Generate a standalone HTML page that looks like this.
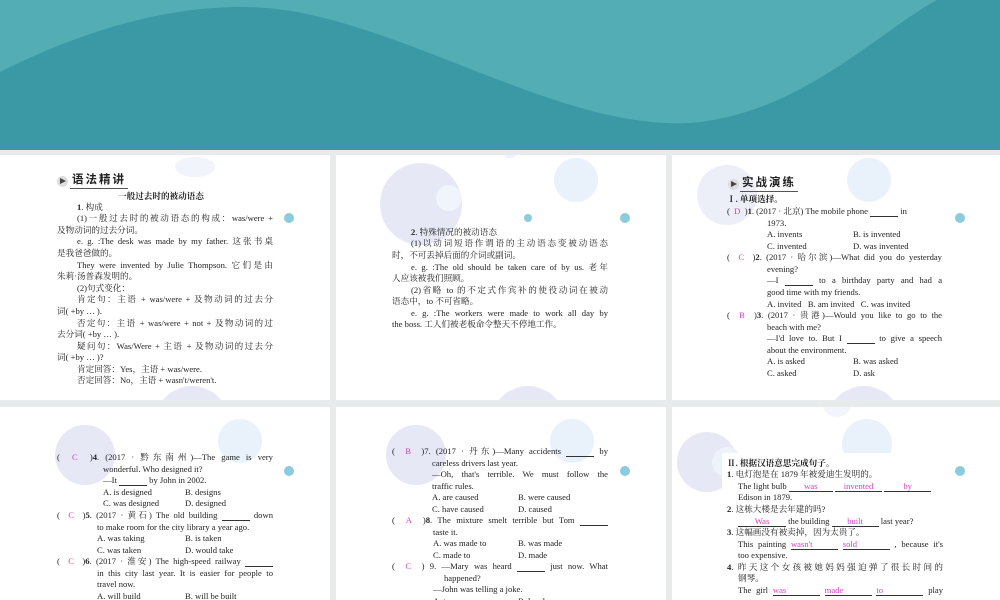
<!DOCTYPE html>
<html><head><meta charset="utf-8"><style>
*{margin:0;padding:0;box-sizing:border-box}
body{width:1000px;height:600px;overflow:hidden;background:#e7ebec;position:relative;font-family:"Liberation Serif","Noto Serif CJK SC",serif;color:#222}
.p{position:absolute;background:#fff;overflow:hidden}
.c{position:absolute;border-radius:50%}
.l{position:absolute;font-size:8.6px;line-height:11px;white-space:nowrap}
.j{text-align:justify;text-align-last:justify;white-space:normal;height:11px}
.m{color:#d23fc4}
.u{display:inline-block;border-bottom:0.8px solid #333;text-align:center;line-height:9px;vertical-align:baseline}
.b{font-weight:bold}
.h{position:absolute;font-family:"Liberation Sans","Noto Sans CJK SC",sans-serif;font-weight:bold;font-size:11.5px;line-height:13px;letter-spacing:2px;border-bottom:1px solid #555;padding:0 2px 1px}
.ic{position:absolute;width:11px;height:11px;border-radius:50%;background:#ddd}
.ic:after{content:"";position:absolute;left:3px;top:2px;border-left:6px solid #444;border-top:3.5px solid transparent;border-bottom:3.5px solid transparent}
.dot{position:absolute;width:10px;height:10px;border-radius:50%;background:#8ccbdb}
</style></head><body>
<svg style="position:absolute;left:0;top:0" width="1000" height="150"><rect width="1000" height="150" fill="#3b99a5"/><path d="M0 72 C100 22 190 2 268 8 C400 20 560 130 689 123 C800 115 880 30 937 0 L0 0 Z" fill="#53adb5"/></svg>

<!-- panel 1 -->
<div class="p" style="left:0;top:155px;width:330px;height:245px">
<div class="c" style="left:175px;top:2px;width:40px;height:20px;background:#f1f4fb"></div>
<div class="c" style="left:155px;top:231px;width:74px;height:74px;background:#e6e8f6"></div>
<div class="dot" style="left:284px;top:58px"></div>
<div class="ic" style="left:57px;top:21px"></div>
<div class="h" style="left:70px;top:19px">语法精讲</div>
<div class="l b" style="left:118px;top:36px">一般过去时的被动语态</div>
<div class="l" style="left:77px;top:47px"><b>1</b>. 构成</div>
<div class="l j" style="left:77px;top:58px;width:196px">(1)一般过去时的被动语态的构成：was/were +</div>
<div class="l" style="left:57px;top:70px">及物动词的过去分词。</div>
<div class="l j" style="left:77px;top:81px;width:196px">e. g. :The desk was made by my father. 这张书桌</div>
<div class="l" style="left:57px;top:93px">是我爸爸做的。</div>
<div class="l j" style="left:77px;top:105px;width:196px">They were invented by Julie Thompson. 它们是由</div>
<div class="l" style="left:57px;top:116px">朱莉·汤普森发明的。</div>
<div class="l" style="left:77px;top:128px">(2)句式变化：</div>
<div class="l j" style="left:77px;top:139px;width:196px">肯定句：主语 + was/were + 及物动词的过去分</div>
<div class="l" style="left:57px;top:151px">词( +by … ).</div>
<div class="l j" style="left:77px;top:163px;width:196px">否定句：主语 + was/were + not + 及物动词的过</div>
<div class="l" style="left:57px;top:174px">去分词( +by … ).</div>
<div class="l j" style="left:77px;top:186px;width:196px">疑问句：Was/Were + 主语 + 及物动词的过去分</div>
<div class="l" style="left:57px;top:197px">词( +by … )?</div>
<div class="l" style="left:77px;top:209px">肯定回答：Yes，主语 + was/were.</div>
<div class="l" style="left:77px;top:220px">否定回答：No，主语 + wasn't/weren't.</div>
</div>

<!-- panel 2 -->
<div class="p" style="left:336px;top:155px;width:330px;height:245px">
<div class="c" style="left:44px;top:8px;width:82px;height:82px;background:#e6e8f6"></div>
<div class="c" style="left:100px;top:30px;width:26px;height:26px;background:#f0f4fb"></div>
<div class="c" style="left:218px;top:3px;width:44px;height:44px;background:#e9f1fb"></div>
<div class="dot" style="left:188px;top:59px;width:8px;height:8px"></div>
<div class="dot" style="left:284px;top:58px"></div>
<div class="c" style="left:165px;top:-15px;width:18px;height:18px;background:#eef2fa"></div>
<div class="c" style="left:155px;top:231px;width:74px;height:74px;background:#e6e8f6"></div>
<div class="l" style="left:75px;top:72px"><b>2</b>. 特殊情况的被动语态</div>
<div class="l j" style="left:75px;top:83px;width:197px">(1)以动词短语作谓语的主动语态变被动语态</div>
<div class="l" style="left:56px;top:95px">时，不可丢掉后面的介词或副词。</div>
<div class="l j" style="left:75px;top:107px;width:197px">e. g. :The old should be taken care of by us. 老年</div>
<div class="l" style="left:56px;top:118px">人应该被我们照顾。</div>
<div class="l j" style="left:75px;top:130px;width:197px">(2)省略 to 的不定式作宾补的使役动词在被动</div>
<div class="l" style="left:56px;top:141px">语态中，to 不可省略。</div>
<div class="l j" style="left:75px;top:153px;width:197px">e. g. :The workers were made to work all day by</div>
<div class="l" style="left:56px;top:164px">the boss. 工人们被老板命令整天不停地工作。</div>
</div>

<!-- panel 3 -->
<div class="p" style="left:672px;top:155px;width:328px;height:245px">
<div class="c" style="left:25px;top:10px;width:60px;height:60px;background:#eceef8"></div>
<div class="c" style="left:175px;top:3px;width:44px;height:44px;background:#e9f1fb"></div>
<div class="dot" style="left:283px;top:58px"></div>
<div class="c" style="left:155px;top:231px;width:74px;height:74px;background:#e6e8f6"></div>
<div class="ic" style="left:56px;top:24px"></div>
<div class="h" style="left:68px;top:22px">实战演练</div>
<div class="l b" style="left:55px;top:39px">Ⅰ. 单项选择。</div>
<div class="l" style="left:55px;top:51px">( &nbsp;<span class="m">D</span>&nbsp; )<b>1</b>. (2017 · 北京) The mobile phone <span class="u" style="width:28px">&nbsp;</span> in</div>
<div class="l" style="left:95px;top:63px">1973.</div>
<div class="l" style="left:95px;top:74px">A. invents</div><div class="l" style="left:181px;top:74px">B. is invented</div>
<div class="l" style="left:95px;top:86px">C. invented</div><div class="l" style="left:181px;top:86px">D. was invented</div>
<div class="l j" style="left:55px;top:97px;width:215px">( &nbsp;<span class="m">C</span>&nbsp; )<b>2</b>. (2017 · 哈尔滨)—What did you do yesterday</div>
<div class="l" style="left:95px;top:109px">evening?</div>
<div class="l j" style="left:95px;top:120px;width:175px">—I <span class="u" style="width:28px">&nbsp;</span> to a birthday party and had a</div>
<div class="l" style="left:95px;top:132px">good time with my friends.</div>
<div class="l" style="left:95px;top:144px">A. invited &nbsp;&nbsp;B. am invited &nbsp;&nbsp;C. was invited</div>
<div class="l j" style="left:55px;top:155px;width:215px">( &nbsp;<span class="m">B</span>&nbsp; )<b>3</b>. (2017 · 贵港)—Would you like to go to the</div>
<div class="l" style="left:95px;top:167px">beach with me?</div>
<div class="l j" style="left:95px;top:178px;width:175px">—I'd love to. But I <span class="u" style="width:28px">&nbsp;</span> to give a speech</div>
<div class="l" style="left:95px;top:190px">about the environment.</div>
<div class="l" style="left:95px;top:201px">A. is asked</div><div class="l" style="left:181px;top:201px">B. was asked</div>
<div class="l" style="left:95px;top:213px">C. asked</div><div class="l" style="left:181px;top:213px">D. ask</div>
</div>

<!-- row 2 panel 1 -->
<div class="p" style="left:0;top:407px;width:330px;height:193px">
<div class="c" style="left:55px;top:18px;width:60px;height:60px;background:#e6e8f6"></div>
<div class="c" style="left:218px;top:12px;width:44px;height:44px;background:#e9f1fb"></div>
<div class="dot" style="left:284px;top:59px"></div>
<div class="l j" style="left:57px;top:45px;width:216px">( &nbsp;<span class="m">C</span>&nbsp; )<b>4</b>. (2017 · 黔东南州)—The game is very</div>
<div class="l" style="left:103px;top:57px">wonderful. Who designed it?</div>
<div class="l" style="left:103px;top:68px">—It <span class="u" style="width:28px">&nbsp;</span> by John in 2002.</div>
<div class="l" style="left:103px;top:80px">A. is designed</div><div class="l" style="left:185px;top:80px">B. designs</div>
<div class="l" style="left:103px;top:91px">C. was designed</div><div class="l" style="left:185px;top:91px">D. designed</div>
<div class="l j" style="left:57px;top:103px;width:216px">( &nbsp;<span class="m">C</span>&nbsp; )<b>5</b>. (2017 · 黄石) The old building <span class="u" style="width:28px">&nbsp;</span> down</div>
<div class="l" style="left:97px;top:115px">to make room for the city library a year ago.</div>
<div class="l" style="left:97px;top:126px">A. was taking</div><div class="l" style="left:185px;top:126px">B. is taken</div>
<div class="l" style="left:97px;top:138px">C. was taken</div><div class="l" style="left:185px;top:138px">D. would take</div>
<div class="l j" style="left:57px;top:149px;width:216px">( &nbsp;<span class="m">C</span>&nbsp; )<b>6</b>. (2017 · 淮安) The high-speed railway <span class="u" style="width:28px">&nbsp;</span></div>
<div class="l j" style="left:97px;top:161px;width:176px">in this city last year. It is easier for people to</div>
<div class="l" style="left:97px;top:172px">travel now.</div>
<div class="l" style="left:97px;top:184px">A. will build</div><div class="l" style="left:185px;top:184px">B. will be built</div>
</div>

<!-- row 2 panel 2 -->
<div class="p" style="left:336px;top:407px;width:330px;height:193px">
<div class="c" style="left:50px;top:18px;width:60px;height:60px;background:#e6e8f6"></div>
<div class="c" style="left:214px;top:12px;width:44px;height:44px;background:#e9f1fb"></div>
<div class="dot" style="left:284px;top:59px"></div>
<div class="l j" style="left:56px;top:39px;width:216px">( &nbsp;<span class="m">B</span>&nbsp; )7. (2017 · 丹东)—Many accidents <span class="u" style="width:28px">&nbsp;</span> by</div>
<div class="l" style="left:96px;top:51px">careless drivers last year.</div>
<div class="l j" style="left:96px;top:62px;width:176px">—Oh, that's terrible. We must follow the</div>
<div class="l" style="left:96px;top:74px">traffic rules.</div>
<div class="l" style="left:96px;top:85px">A. are caused</div><div class="l" style="left:182px;top:85px">B. were caused</div>
<div class="l" style="left:96px;top:97px">C. have caused</div><div class="l" style="left:182px;top:97px">D. caused</div>
<div class="l j" style="left:56px;top:108px;width:216px">( &nbsp;<span class="m">A</span>&nbsp; )<b>8</b>. The mixture smelt terrible but Tom <span class="u" style="width:28px">&nbsp;</span></div>
<div class="l" style="left:97px;top:120px">taste it.</div>
<div class="l" style="left:97px;top:131px">A. was made to</div><div class="l" style="left:182px;top:131px">B. was made</div>
<div class="l" style="left:97px;top:143px">C. made to</div><div class="l" style="left:182px;top:143px">D. made</div>
<div class="l j" style="left:56px;top:154px;width:216px">( &nbsp;<span class="m">C</span>&nbsp; ) 9. —Mary was heard <span class="u" style="width:28px">&nbsp;</span> just now. What</div>
<div class="l" style="left:108px;top:166px">happened?</div>
<div class="l" style="left:97px;top:177px">—John was telling a joke.</div>
<div class="l" style="left:97px;top:189px">A. to cry</div><div class="l" style="left:182px;top:189px">B. laugh</div>
</div>

<!-- row 2 panel 3 -->
<div class="p" style="left:672px;top:407px;width:328px;height:193px">
<div class="c" style="left:5px;top:25px;width:60px;height:60px;background:#e6e8f6"></div>
<div class="c" style="left:40px;top:40px;width:30px;height:30px;background:#eef2fa"></div>
<div class="c" style="left:170px;top:12px;width:50px;height:50px;background:#e9f1fb"></div>
<div class="c" style="left:150px;top:-20px;width:30px;height:30px;background:#f2f5fb"></div>
<div class="dot" style="left:283px;top:59px"></div>
<div style="position:absolute;left:50px;top:46px;width:200px;height:150px;background:#fff"></div>
<div class="l b" style="left:55px;top:51px">Ⅱ. 根据汉语意思完成句子。</div>
<div class="l" style="left:55px;top:62px"><b>1</b>. 电灯泡是在 1879 年被爱迪生发明的。</div>
<div class="l" style="left:66px;top:74px">The light bulb <span class="u m" style="width:44px">was</span> <span class="u m" style="width:47px">invented</span> <span class="u m" style="width:47px">by</span></div>
<div class="l" style="left:66px;top:85px">Edison in 1879.</div>
<div class="l" style="left:55px;top:97px"><b>2</b>. 这栋大楼是去年建的吗?</div>
<div class="l" style="left:66px;top:109px"><span class="u m" style="width:48px">Was</span> the building <span class="u m" style="width:47px">built</span> last year?</div>
<div class="l" style="left:55px;top:120px"><b>3</b>. 这幅画没有被卖掉，因为太贵了。</div>
<div class="l j" style="left:66px;top:132px;width:205px">This painting <span class="u m" style="width:47px">wasn't</span> <span class="u m" style="width:47px">sold</span> , because it's</div>
<div class="l" style="left:66px;top:143px">too expensive.</div>
<div class="l j" style="left:55px;top:155px;width:216px"><b>4</b>. 昨天这个女孩被她妈妈强迫弹了很长时间的</div>
<div class="l" style="left:66px;top:166px">钢琴。</div>
<div class="l j" style="left:66px;top:178px;width:205px">The girl <span class="u m" style="width:47px">was</span> <span class="u m" style="width:47px">made</span> <span class="u m" style="width:47px">to</span> play</div>
</div>
</body></html>
